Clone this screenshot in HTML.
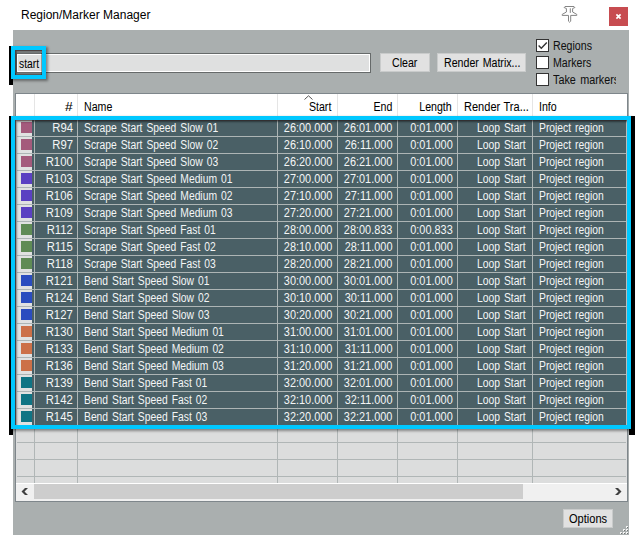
<!DOCTYPE html>
<html><head><meta charset="utf-8">
<style>
*{margin:0;padding:0;box-sizing:border-box}
html,body{width:637px;height:535px;overflow:hidden;background:#fff}
body{position:relative;font-family:"Liberation Sans",sans-serif;font-size:12px;color:#000}
.a{position:absolute}
.t{position:absolute;white-space:nowrap;transform:scaleX(0.885);-webkit-text-stroke:0.05px currentColor}
.w{color:#f4f6f6;word-spacing:1.3px;-webkit-text-stroke:0;transform:scaleX(0.86)}
.n{transform:scaleX(0.91)}
.r{transform:scaleX(0.94)}
</style></head><body>
<div class="a" style="left:21px;top:8px;line-height:14px;font-size:12px;color:#000;white-space:nowrap">Region/Marker Manager</div>
<svg class="a" style="left:558px;top:2px" width="24" height="24" viewBox="0 0 24 24">
 <path d="M7 4.5 H16 L16.9 5.5 L14.6 6.5 V10 L18.8 12.4 V13.4 H12.7 V19.2 L11.6 20.2 L10.5 19.2 V13.4 H4.2 V12.4 L8.4 10 V6.5 L6.1 5.5 Z" fill="#fff" stroke="#858585" stroke-width="1" stroke-linejoin="round"/>
 <path d="M12.3 6.3 V10.9" stroke="#858585" stroke-width="1"/>
</svg>
<div class="a" style="left:609px;top:7px;width:19px;height:19px;background:#c74c50"><svg width="19" height="19" viewBox="0 0 19 19" style="display:block"><path d="M7.4 7.4 L11.6 11.6 M11.6 7.4 L7.4 11.6" stroke="#fff" stroke-width="1.7"/></svg></div>
<div class="a" style="left:13px;top:30px;width:616px;height:505px;background:#aaafaf"></div>
<div class="a" style="left:16px;top:53px;width:355px;height:20px;background:#dfe0e0;border:1px solid #666a6a;box-shadow:inset 0 0 0 1px #fff"></div>
<div class="t" style="top:55.5px;line-height:16px;left:19px;transform-origin:0 0;transform:scaleX(0.86)">start</div>
<div class="a" style="left:380px;top:53px;width:50px;height:19px;background:#e1e1e1;border:1px solid #c9cbcb"></div>
<div class="t" style="top:55px;line-height:17px;left:392px;transform-origin:0 0;">Clear</div>
<div class="a" style="left:437px;top:53px;width:89px;height:19px;background:#e1e1e1;border:1px solid #c9cbcb"></div>
<div class="t" style="top:55px;line-height:17px;left:444px;transform-origin:0 0;word-spacing:1px">Render Matrix...</div>
<div class="a" style="left:536px;top:39px;width:13px;height:13px;background:#fff;border:1px solid #333"></div>
<div class="t" style="top:40px;line-height:13px;color:#111;left:553px;transform-origin:0 0;">Regions</div>
<div class="a" style="left:536px;top:56px;width:13px;height:13px;background:#fff;border:1px solid #333"></div>
<div class="t" style="top:57px;line-height:13px;color:#111;left:553px;transform-origin:0 0;">Markers</div>
<div class="a" style="left:536px;top:73px;width:13px;height:13px;background:#fff;border:1px solid #333"></div>
<div class="a" style="left:553px;top:74px;width:63px;height:16px;overflow:hidden"><div class="t" style="left:0;top:0;line-height:13px;transform-origin:0 0;color:#111;word-spacing:1.5px;transform:scaleX(0.9)">Take markers</div></div>
<svg class="a" style="left:537px;top:40px" width="11" height="11" viewBox="0 0 11 11"><path d="M1.6 5.6 L4.3 8.2 L9.8 2.6" fill="none" stroke="#333" stroke-width="1.4"/></svg>
<div class="a" style="left:15px;top:93px;width:613px;height:409px;border:1px solid #7e868b;background:#dcdddd"></div>
<div class="a" style="left:16px;top:94px;width:611px;height:26px;background:#fff"></div>
<div class="a" style="left:34px;top:94px;width:1px;height:26px;background:#e5e5e5"></div>
<div class="a" style="left:77px;top:94px;width:1px;height:26px;background:#e5e5e5"></div>
<div class="a" style="left:277px;top:94px;width:1px;height:26px;background:#e5e5e5"></div>
<div class="a" style="left:337px;top:94px;width:1px;height:26px;background:#e5e5e5"></div>
<div class="a" style="left:397px;top:94px;width:1px;height:26px;background:#e5e5e5"></div>
<div class="a" style="left:457px;top:94px;width:1px;height:26px;background:#e5e5e5"></div>
<div class="a" style="left:532px;top:94px;width:1px;height:26px;background:#e5e5e5"></div>
<div class="t" style="top:99px;line-height:16px;right:564px;transform-origin:100% 0;transform:scaleX(1.15)">#</div>
<div class="t" style="top:99px;line-height:16px;left:84px;transform-origin:0 0;">Name</div>
<div class="t" style="top:99px;line-height:16px;right:305.7px;transform-origin:100% 0;">Start</div>
<div class="t" style="top:99px;line-height:16px;right:245px;transform-origin:100% 0;">End</div>
<div class="t" style="top:99px;line-height:16px;right:185px;transform-origin:100% 0;">Length</div>
<div class="t" style="top:99px;line-height:16px;left:539px;transform-origin:0 0;">Info</div>
<div class="t" style="top:99px;line-height:16px;left:464px;transform-origin:0 0;transform:scaleX(0.92);word-spacing:0.5px">Render Tra...</div>
<svg class="a" style="left:304px;top:95px" width="9" height="5" viewBox="0 0 9 5"><path d="M0.5 4.5 L4.5 0.8 L8.5 4.5" fill="none" stroke="#555" stroke-width="1"/></svg>
<div class="a" style="left:17px;top:136px;width:609px;height:1px;background:#b0b6b6"></div>
<div class="a" style="left:17px;top:153px;width:609px;height:1px;background:#b0b6b6"></div>
<div class="a" style="left:17px;top:170px;width:609px;height:1px;background:#b0b6b6"></div>
<div class="a" style="left:17px;top:187px;width:609px;height:1px;background:#b0b6b6"></div>
<div class="a" style="left:17px;top:204px;width:609px;height:1px;background:#b0b6b6"></div>
<div class="a" style="left:17px;top:221px;width:609px;height:1px;background:#b0b6b6"></div>
<div class="a" style="left:17px;top:238px;width:609px;height:1px;background:#b0b6b6"></div>
<div class="a" style="left:17px;top:255px;width:609px;height:1px;background:#b0b6b6"></div>
<div class="a" style="left:17px;top:272px;width:609px;height:1px;background:#b0b6b6"></div>
<div class="a" style="left:17px;top:289px;width:609px;height:1px;background:#b0b6b6"></div>
<div class="a" style="left:17px;top:306px;width:609px;height:1px;background:#b0b6b6"></div>
<div class="a" style="left:17px;top:323px;width:609px;height:1px;background:#b0b6b6"></div>
<div class="a" style="left:17px;top:340px;width:609px;height:1px;background:#b0b6b6"></div>
<div class="a" style="left:17px;top:357px;width:609px;height:1px;background:#b0b6b6"></div>
<div class="a" style="left:17px;top:374px;width:609px;height:1px;background:#b0b6b6"></div>
<div class="a" style="left:17px;top:391px;width:609px;height:1px;background:#b0b6b6"></div>
<div class="a" style="left:17px;top:408px;width:609px;height:1px;background:#b0b6b6"></div>
<div class="a" style="left:17px;top:425px;width:609px;height:1px;background:#b0b6b6"></div>
<div class="a" style="left:17px;top:442px;width:609px;height:1px;background:#b0b6b6"></div>
<div class="a" style="left:17px;top:459px;width:609px;height:1px;background:#b0b6b6"></div>
<div class="a" style="left:17px;top:476px;width:609px;height:1px;background:#b0b6b6"></div>
<div class="a" style="left:34px;top:120px;width:1px;height:363px;background:#b0b6b6"></div>
<div class="a" style="left:77px;top:120px;width:1px;height:363px;background:#b0b6b6"></div>
<div class="a" style="left:277px;top:120px;width:1px;height:363px;background:#b0b6b6"></div>
<div class="a" style="left:337px;top:120px;width:1px;height:363px;background:#b0b6b6"></div>
<div class="a" style="left:397px;top:120px;width:1px;height:363px;background:#b0b6b6"></div>
<div class="a" style="left:457px;top:120px;width:1px;height:363px;background:#b0b6b6"></div>
<div class="a" style="left:532px;top:120px;width:1px;height:363px;background:#b0b6b6"></div>
<div class="a" style="left:16px;top:120px;width:16px;height:306px;background:#e0e1e1"></div>
<div class="a" style="left:32px;top:120px;width:594px;height:306px;background:#4a6066"></div>
<div class="a" style="left:21px;top:122px;width:11px;height:11px;background:#a45a7c"></div>
<div class="a" style="left:17px;top:136px;width:609px;height:1px;background:#adb5b5"></div>
<div class="a" style="left:21px;top:139px;width:11px;height:11px;background:#a45a7c"></div>
<div class="a" style="left:17px;top:153px;width:609px;height:1px;background:#adb5b5"></div>
<div class="a" style="left:21px;top:156px;width:11px;height:11px;background:#a45a7c"></div>
<div class="a" style="left:17px;top:170px;width:609px;height:1px;background:#adb5b5"></div>
<div class="a" style="left:21px;top:173px;width:11px;height:11px;background:#5a40c2"></div>
<div class="a" style="left:17px;top:187px;width:609px;height:1px;background:#adb5b5"></div>
<div class="a" style="left:21px;top:190px;width:11px;height:11px;background:#5a40c2"></div>
<div class="a" style="left:17px;top:204px;width:609px;height:1px;background:#adb5b5"></div>
<div class="a" style="left:21px;top:207px;width:11px;height:11px;background:#5a40c2"></div>
<div class="a" style="left:17px;top:221px;width:609px;height:1px;background:#adb5b5"></div>
<div class="a" style="left:21px;top:224px;width:11px;height:11px;background:#5f8b55"></div>
<div class="a" style="left:17px;top:238px;width:609px;height:1px;background:#adb5b5"></div>
<div class="a" style="left:21px;top:241px;width:11px;height:11px;background:#5f8b55"></div>
<div class="a" style="left:17px;top:255px;width:609px;height:1px;background:#adb5b5"></div>
<div class="a" style="left:21px;top:258px;width:11px;height:11px;background:#5f8b55"></div>
<div class="a" style="left:17px;top:272px;width:609px;height:1px;background:#adb5b5"></div>
<div class="a" style="left:21px;top:275px;width:11px;height:11px;background:#2a4cbf"></div>
<div class="a" style="left:17px;top:289px;width:609px;height:1px;background:#adb5b5"></div>
<div class="a" style="left:21px;top:292px;width:11px;height:11px;background:#2a4cbf"></div>
<div class="a" style="left:17px;top:306px;width:609px;height:1px;background:#adb5b5"></div>
<div class="a" style="left:21px;top:309px;width:11px;height:11px;background:#2a4cbf"></div>
<div class="a" style="left:17px;top:323px;width:609px;height:1px;background:#adb5b5"></div>
<div class="a" style="left:21px;top:326px;width:11px;height:11px;background:#cc7048"></div>
<div class="a" style="left:17px;top:340px;width:609px;height:1px;background:#adb5b5"></div>
<div class="a" style="left:21px;top:343px;width:11px;height:11px;background:#cc7048"></div>
<div class="a" style="left:17px;top:357px;width:609px;height:1px;background:#adb5b5"></div>
<div class="a" style="left:21px;top:360px;width:11px;height:11px;background:#cc7048"></div>
<div class="a" style="left:17px;top:374px;width:609px;height:1px;background:#adb5b5"></div>
<div class="a" style="left:21px;top:377px;width:11px;height:11px;background:#0f7484"></div>
<div class="a" style="left:17px;top:391px;width:609px;height:1px;background:#adb5b5"></div>
<div class="a" style="left:21px;top:394px;width:11px;height:11px;background:#0f7484"></div>
<div class="a" style="left:17px;top:408px;width:609px;height:1px;background:#adb5b5"></div>
<div class="a" style="left:21px;top:411px;width:11px;height:11px;background:#0f7484"></div>
<div class="a" style="left:17px;top:425px;width:609px;height:1px;background:#adb5b5"></div>
<div class="a" style="left:34px;top:120px;width:1px;height:306px;background:#adb5b5"></div>
<div class="a" style="left:77px;top:120px;width:1px;height:306px;background:#adb5b5"></div>
<div class="a" style="left:277px;top:120px;width:1px;height:306px;background:#adb5b5"></div>
<div class="a" style="left:337px;top:120px;width:1px;height:306px;background:#adb5b5"></div>
<div class="a" style="left:397px;top:120px;width:1px;height:306px;background:#adb5b5"></div>
<div class="a" style="left:457px;top:120px;width:1px;height:306px;background:#adb5b5"></div>
<div class="a" style="left:532px;top:120px;width:1px;height:306px;background:#adb5b5"></div>
<div class="t w r" style="top:120px;line-height:16px;right:564px;transform-origin:100% 0;">R94</div>
<div class="t w" style="top:120px;line-height:16px;left:84px;transform-origin:0 0;">Scrape Start Speed Slow 01</div>
<div class="t w n" style="top:120px;line-height:16px;right:304.5px;transform-origin:100% 0;">26:00.000</div>
<div class="t w n" style="top:120px;line-height:16px;right:244.5px;transform-origin:100% 0;">26:01.000</div>
<div class="t w n" style="top:120px;line-height:16px;right:184.5px;transform-origin:100% 0;">0:01.000</div>
<div class="t w" style="top:120px;line-height:16px;right:111px;transform-origin:100% 0;">Loop Start</div>
<div class="t w" style="top:120px;line-height:16px;left:539px;transform-origin:0 0;">Project region</div>
<div class="t w r" style="top:137px;line-height:16px;right:564px;transform-origin:100% 0;">R97</div>
<div class="t w" style="top:137px;line-height:16px;left:84px;transform-origin:0 0;">Scrape Start Speed Slow 02</div>
<div class="t w n" style="top:137px;line-height:16px;right:304.5px;transform-origin:100% 0;">26:10.000</div>
<div class="t w n" style="top:137px;line-height:16px;right:244.5px;transform-origin:100% 0;">26:11.000</div>
<div class="t w n" style="top:137px;line-height:16px;right:184.5px;transform-origin:100% 0;">0:01.000</div>
<div class="t w" style="top:137px;line-height:16px;right:111px;transform-origin:100% 0;">Loop Start</div>
<div class="t w" style="top:137px;line-height:16px;left:539px;transform-origin:0 0;">Project region</div>
<div class="t w r" style="top:154px;line-height:16px;right:564px;transform-origin:100% 0;">R100</div>
<div class="t w" style="top:154px;line-height:16px;left:84px;transform-origin:0 0;">Scrape Start Speed Slow 03</div>
<div class="t w n" style="top:154px;line-height:16px;right:304.5px;transform-origin:100% 0;">26:20.000</div>
<div class="t w n" style="top:154px;line-height:16px;right:244.5px;transform-origin:100% 0;">26:21.000</div>
<div class="t w n" style="top:154px;line-height:16px;right:184.5px;transform-origin:100% 0;">0:01.000</div>
<div class="t w" style="top:154px;line-height:16px;right:111px;transform-origin:100% 0;">Loop Start</div>
<div class="t w" style="top:154px;line-height:16px;left:539px;transform-origin:0 0;">Project region</div>
<div class="t w r" style="top:171px;line-height:16px;right:564px;transform-origin:100% 0;">R103</div>
<div class="t w" style="top:171px;line-height:16px;left:84px;transform-origin:0 0;">Scrape Start Speed Medium 01</div>
<div class="t w n" style="top:171px;line-height:16px;right:304.5px;transform-origin:100% 0;">27:00.000</div>
<div class="t w n" style="top:171px;line-height:16px;right:244.5px;transform-origin:100% 0;">27:01.000</div>
<div class="t w n" style="top:171px;line-height:16px;right:184.5px;transform-origin:100% 0;">0:01.000</div>
<div class="t w" style="top:171px;line-height:16px;right:111px;transform-origin:100% 0;">Loop Start</div>
<div class="t w" style="top:171px;line-height:16px;left:539px;transform-origin:0 0;">Project region</div>
<div class="t w r" style="top:188px;line-height:16px;right:564px;transform-origin:100% 0;">R106</div>
<div class="t w" style="top:188px;line-height:16px;left:84px;transform-origin:0 0;">Scrape Start Speed Medium 02</div>
<div class="t w n" style="top:188px;line-height:16px;right:304.5px;transform-origin:100% 0;">27:10.000</div>
<div class="t w n" style="top:188px;line-height:16px;right:244.5px;transform-origin:100% 0;">27:11.000</div>
<div class="t w n" style="top:188px;line-height:16px;right:184.5px;transform-origin:100% 0;">0:01.000</div>
<div class="t w" style="top:188px;line-height:16px;right:111px;transform-origin:100% 0;">Loop Start</div>
<div class="t w" style="top:188px;line-height:16px;left:539px;transform-origin:0 0;">Project region</div>
<div class="t w r" style="top:205px;line-height:16px;right:564px;transform-origin:100% 0;">R109</div>
<div class="t w" style="top:205px;line-height:16px;left:84px;transform-origin:0 0;">Scrape Start Speed Medium 03</div>
<div class="t w n" style="top:205px;line-height:16px;right:304.5px;transform-origin:100% 0;">27:20.000</div>
<div class="t w n" style="top:205px;line-height:16px;right:244.5px;transform-origin:100% 0;">27:21.000</div>
<div class="t w n" style="top:205px;line-height:16px;right:184.5px;transform-origin:100% 0;">0:01.000</div>
<div class="t w" style="top:205px;line-height:16px;right:111px;transform-origin:100% 0;">Loop Start</div>
<div class="t w" style="top:205px;line-height:16px;left:539px;transform-origin:0 0;">Project region</div>
<div class="t w r" style="top:222px;line-height:16px;right:564px;transform-origin:100% 0;">R112</div>
<div class="t w" style="top:222px;line-height:16px;left:84px;transform-origin:0 0;">Scrape Start Speed Fast 01</div>
<div class="t w n" style="top:222px;line-height:16px;right:304.5px;transform-origin:100% 0;">28:00.000</div>
<div class="t w n" style="top:222px;line-height:16px;right:244.5px;transform-origin:100% 0;">28:00.833</div>
<div class="t w n" style="top:222px;line-height:16px;right:184.5px;transform-origin:100% 0;">0:00.833</div>
<div class="t w" style="top:222px;line-height:16px;right:111px;transform-origin:100% 0;">Loop Start</div>
<div class="t w" style="top:222px;line-height:16px;left:539px;transform-origin:0 0;">Project region</div>
<div class="t w r" style="top:239px;line-height:16px;right:564px;transform-origin:100% 0;">R115</div>
<div class="t w" style="top:239px;line-height:16px;left:84px;transform-origin:0 0;">Scrape Start Speed Fast 02</div>
<div class="t w n" style="top:239px;line-height:16px;right:304.5px;transform-origin:100% 0;">28:10.000</div>
<div class="t w n" style="top:239px;line-height:16px;right:244.5px;transform-origin:100% 0;">28:11.000</div>
<div class="t w n" style="top:239px;line-height:16px;right:184.5px;transform-origin:100% 0;">0:01.000</div>
<div class="t w" style="top:239px;line-height:16px;right:111px;transform-origin:100% 0;">Loop Start</div>
<div class="t w" style="top:239px;line-height:16px;left:539px;transform-origin:0 0;">Project region</div>
<div class="t w r" style="top:256px;line-height:16px;right:564px;transform-origin:100% 0;">R118</div>
<div class="t w" style="top:256px;line-height:16px;left:84px;transform-origin:0 0;">Scrape Start Speed Fast 03</div>
<div class="t w n" style="top:256px;line-height:16px;right:304.5px;transform-origin:100% 0;">28:20.000</div>
<div class="t w n" style="top:256px;line-height:16px;right:244.5px;transform-origin:100% 0;">28:21.000</div>
<div class="t w n" style="top:256px;line-height:16px;right:184.5px;transform-origin:100% 0;">0:01.000</div>
<div class="t w" style="top:256px;line-height:16px;right:111px;transform-origin:100% 0;">Loop Start</div>
<div class="t w" style="top:256px;line-height:16px;left:539px;transform-origin:0 0;">Project region</div>
<div class="t w r" style="top:273px;line-height:16px;right:564px;transform-origin:100% 0;">R121</div>
<div class="t w" style="top:273px;line-height:16px;left:84px;transform-origin:0 0;">Bend Start Speed Slow 01</div>
<div class="t w n" style="top:273px;line-height:16px;right:304.5px;transform-origin:100% 0;">30:00.000</div>
<div class="t w n" style="top:273px;line-height:16px;right:244.5px;transform-origin:100% 0;">30:01.000</div>
<div class="t w n" style="top:273px;line-height:16px;right:184.5px;transform-origin:100% 0;">0:01.000</div>
<div class="t w" style="top:273px;line-height:16px;right:111px;transform-origin:100% 0;">Loop Start</div>
<div class="t w" style="top:273px;line-height:16px;left:539px;transform-origin:0 0;">Project region</div>
<div class="t w r" style="top:290px;line-height:16px;right:564px;transform-origin:100% 0;">R124</div>
<div class="t w" style="top:290px;line-height:16px;left:84px;transform-origin:0 0;">Bend Start Speed Slow 02</div>
<div class="t w n" style="top:290px;line-height:16px;right:304.5px;transform-origin:100% 0;">30:10.000</div>
<div class="t w n" style="top:290px;line-height:16px;right:244.5px;transform-origin:100% 0;">30:11.000</div>
<div class="t w n" style="top:290px;line-height:16px;right:184.5px;transform-origin:100% 0;">0:01.000</div>
<div class="t w" style="top:290px;line-height:16px;right:111px;transform-origin:100% 0;">Loop Start</div>
<div class="t w" style="top:290px;line-height:16px;left:539px;transform-origin:0 0;">Project region</div>
<div class="t w r" style="top:307px;line-height:16px;right:564px;transform-origin:100% 0;">R127</div>
<div class="t w" style="top:307px;line-height:16px;left:84px;transform-origin:0 0;">Bend Start Speed Slow 03</div>
<div class="t w n" style="top:307px;line-height:16px;right:304.5px;transform-origin:100% 0;">30:20.000</div>
<div class="t w n" style="top:307px;line-height:16px;right:244.5px;transform-origin:100% 0;">30:21.000</div>
<div class="t w n" style="top:307px;line-height:16px;right:184.5px;transform-origin:100% 0;">0:01.000</div>
<div class="t w" style="top:307px;line-height:16px;right:111px;transform-origin:100% 0;">Loop Start</div>
<div class="t w" style="top:307px;line-height:16px;left:539px;transform-origin:0 0;">Project region</div>
<div class="t w r" style="top:324px;line-height:16px;right:564px;transform-origin:100% 0;">R130</div>
<div class="t w" style="top:324px;line-height:16px;left:84px;transform-origin:0 0;">Bend Start Speed Medium 01</div>
<div class="t w n" style="top:324px;line-height:16px;right:304.5px;transform-origin:100% 0;">31:00.000</div>
<div class="t w n" style="top:324px;line-height:16px;right:244.5px;transform-origin:100% 0;">31:01.000</div>
<div class="t w n" style="top:324px;line-height:16px;right:184.5px;transform-origin:100% 0;">0:01.000</div>
<div class="t w" style="top:324px;line-height:16px;right:111px;transform-origin:100% 0;">Loop Start</div>
<div class="t w" style="top:324px;line-height:16px;left:539px;transform-origin:0 0;">Project region</div>
<div class="t w r" style="top:341px;line-height:16px;right:564px;transform-origin:100% 0;">R133</div>
<div class="t w" style="top:341px;line-height:16px;left:84px;transform-origin:0 0;">Bend Start Speed Medium 02</div>
<div class="t w n" style="top:341px;line-height:16px;right:304.5px;transform-origin:100% 0;">31:10.000</div>
<div class="t w n" style="top:341px;line-height:16px;right:244.5px;transform-origin:100% 0;">31:11.000</div>
<div class="t w n" style="top:341px;line-height:16px;right:184.5px;transform-origin:100% 0;">0:01.000</div>
<div class="t w" style="top:341px;line-height:16px;right:111px;transform-origin:100% 0;">Loop Start</div>
<div class="t w" style="top:341px;line-height:16px;left:539px;transform-origin:0 0;">Project region</div>
<div class="t w r" style="top:358px;line-height:16px;right:564px;transform-origin:100% 0;">R136</div>
<div class="t w" style="top:358px;line-height:16px;left:84px;transform-origin:0 0;">Bend Start Speed Medium 03</div>
<div class="t w n" style="top:358px;line-height:16px;right:304.5px;transform-origin:100% 0;">31:20.000</div>
<div class="t w n" style="top:358px;line-height:16px;right:244.5px;transform-origin:100% 0;">31:21.000</div>
<div class="t w n" style="top:358px;line-height:16px;right:184.5px;transform-origin:100% 0;">0:01.000</div>
<div class="t w" style="top:358px;line-height:16px;right:111px;transform-origin:100% 0;">Loop Start</div>
<div class="t w" style="top:358px;line-height:16px;left:539px;transform-origin:0 0;">Project region</div>
<div class="t w r" style="top:375px;line-height:16px;right:564px;transform-origin:100% 0;">R139</div>
<div class="t w" style="top:375px;line-height:16px;left:84px;transform-origin:0 0;">Bend Start Speed Fast 01</div>
<div class="t w n" style="top:375px;line-height:16px;right:304.5px;transform-origin:100% 0;">32:00.000</div>
<div class="t w n" style="top:375px;line-height:16px;right:244.5px;transform-origin:100% 0;">32:01.000</div>
<div class="t w n" style="top:375px;line-height:16px;right:184.5px;transform-origin:100% 0;">0:01.000</div>
<div class="t w" style="top:375px;line-height:16px;right:111px;transform-origin:100% 0;">Loop Start</div>
<div class="t w" style="top:375px;line-height:16px;left:539px;transform-origin:0 0;">Project region</div>
<div class="t w r" style="top:392px;line-height:16px;right:564px;transform-origin:100% 0;">R142</div>
<div class="t w" style="top:392px;line-height:16px;left:84px;transform-origin:0 0;">Bend Start Speed Fast 02</div>
<div class="t w n" style="top:392px;line-height:16px;right:304.5px;transform-origin:100% 0;">32:10.000</div>
<div class="t w n" style="top:392px;line-height:16px;right:244.5px;transform-origin:100% 0;">32:11.000</div>
<div class="t w n" style="top:392px;line-height:16px;right:184.5px;transform-origin:100% 0;">0:01.000</div>
<div class="t w" style="top:392px;line-height:16px;right:111px;transform-origin:100% 0;">Loop Start</div>
<div class="t w" style="top:392px;line-height:16px;left:539px;transform-origin:0 0;">Project region</div>
<div class="t w r" style="top:409px;line-height:16px;right:564px;transform-origin:100% 0;">R145</div>
<div class="t w" style="top:409px;line-height:16px;left:84px;transform-origin:0 0;">Bend Start Speed Fast 03</div>
<div class="t w n" style="top:409px;line-height:16px;right:304.5px;transform-origin:100% 0;">32:20.000</div>
<div class="t w n" style="top:409px;line-height:16px;right:244.5px;transform-origin:100% 0;">32:21.000</div>
<div class="t w n" style="top:409px;line-height:16px;right:184.5px;transform-origin:100% 0;">0:01.000</div>
<div class="t w" style="top:409px;line-height:16px;right:111px;transform-origin:100% 0;">Loop Start</div>
<div class="t w" style="top:409px;line-height:16px;left:539px;transform-origin:0 0;">Project region</div>
<div class="a" style="left:16px;top:483px;width:611px;height:18px;background:#f0f0f0;border-top:1px solid #fff"></div>
<div class="a" style="left:34px;top:484px;width:489px;height:15px;background:#cdcdcd"></div>
<svg class="a" style="left:20px;top:486px" width="10" height="11" viewBox="0 0 10 11"><path d="M5 2 H8 L4.5 5.5 L8 9 H5 L1.5 5.5 Z" fill="#404040"/></svg>
<svg class="a" style="left:613px;top:486px" width="10" height="11" viewBox="0 0 10 11"><path d="M2 2 H5 L8.5 5.5 L5 9 H2 L5.5 5.5 Z" fill="#404040"/></svg>
<div class="a" style="left:9px;top:46px;width:4px;height:39px;background:#000"></div>
<div class="a" style="left:11px;top:46px;width:35px;height:33px;border:4px solid #00c8ff;box-shadow:inset 1px 1px 0 0 rgba(60,30,30,0.35), inset 0 2px 0 1px rgba(0,0,0,0.3), inset 0 -2px 0 0 rgba(0,0,0,0.3), inset 1px 0 1px 1px rgba(0,0,0,0.3), 1px 1.5px 2.5px 0.5px rgba(0,0,0,0.4)"></div>
<div class="a" style="left:9px;top:116px;width:4px;height:319px;background:#000"></div>
<div class="a" style="left:629px;top:116px;width:6px;height:319px;background:#000"></div>
<div class="a" style="left:626px;top:120px;width:1px;height:306px;background:#b9bdbd"></div>
<div class="a" style="left:11px;top:116px;width:620px;height:313px;border:4px solid #00c8ff;box-shadow:inset 1px 1px 0 0 rgba(60,30,30,0.35), inset 2px 2px 2px 0 rgba(0,0,0,0.42), 1px 1.5px 2.5px 0.5px rgba(0,0,0,0.4)"></div>
<div class="a" style="left:563px;top:509px;width:50px;height:19px;background:#e1e1e1;border:1px solid #c9cbcb"></div>
<div class="t" style="top:511px;line-height:17px;left:568.6px;transform-origin:0 0;transform:scaleX(0.92)">Options</div>
<div class="a" style="left:626px;top:526px;width:2px;height:2px;background:#f4f4f4"></div><div class="a" style="left:627px;top:527px;width:1px;height:1px;background:#707575"></div>
<div class="a" style="left:626px;top:529px;width:2px;height:2px;background:#f4f4f4"></div><div class="a" style="left:627px;top:530px;width:1px;height:1px;background:#707575"></div>
<div class="a" style="left:623px;top:529px;width:2px;height:2px;background:#f4f4f4"></div><div class="a" style="left:624px;top:530px;width:1px;height:1px;background:#707575"></div>
<div class="a" style="left:626px;top:532px;width:2px;height:2px;background:#f4f4f4"></div><div class="a" style="left:627px;top:533px;width:1px;height:1px;background:#707575"></div>
<div class="a" style="left:623px;top:532px;width:2px;height:2px;background:#f4f4f4"></div><div class="a" style="left:624px;top:533px;width:1px;height:1px;background:#707575"></div>
<div class="a" style="left:620px;top:532px;width:2px;height:2px;background:#f4f4f4"></div><div class="a" style="left:621px;top:533px;width:1px;height:1px;background:#707575"></div>
</body></html>
